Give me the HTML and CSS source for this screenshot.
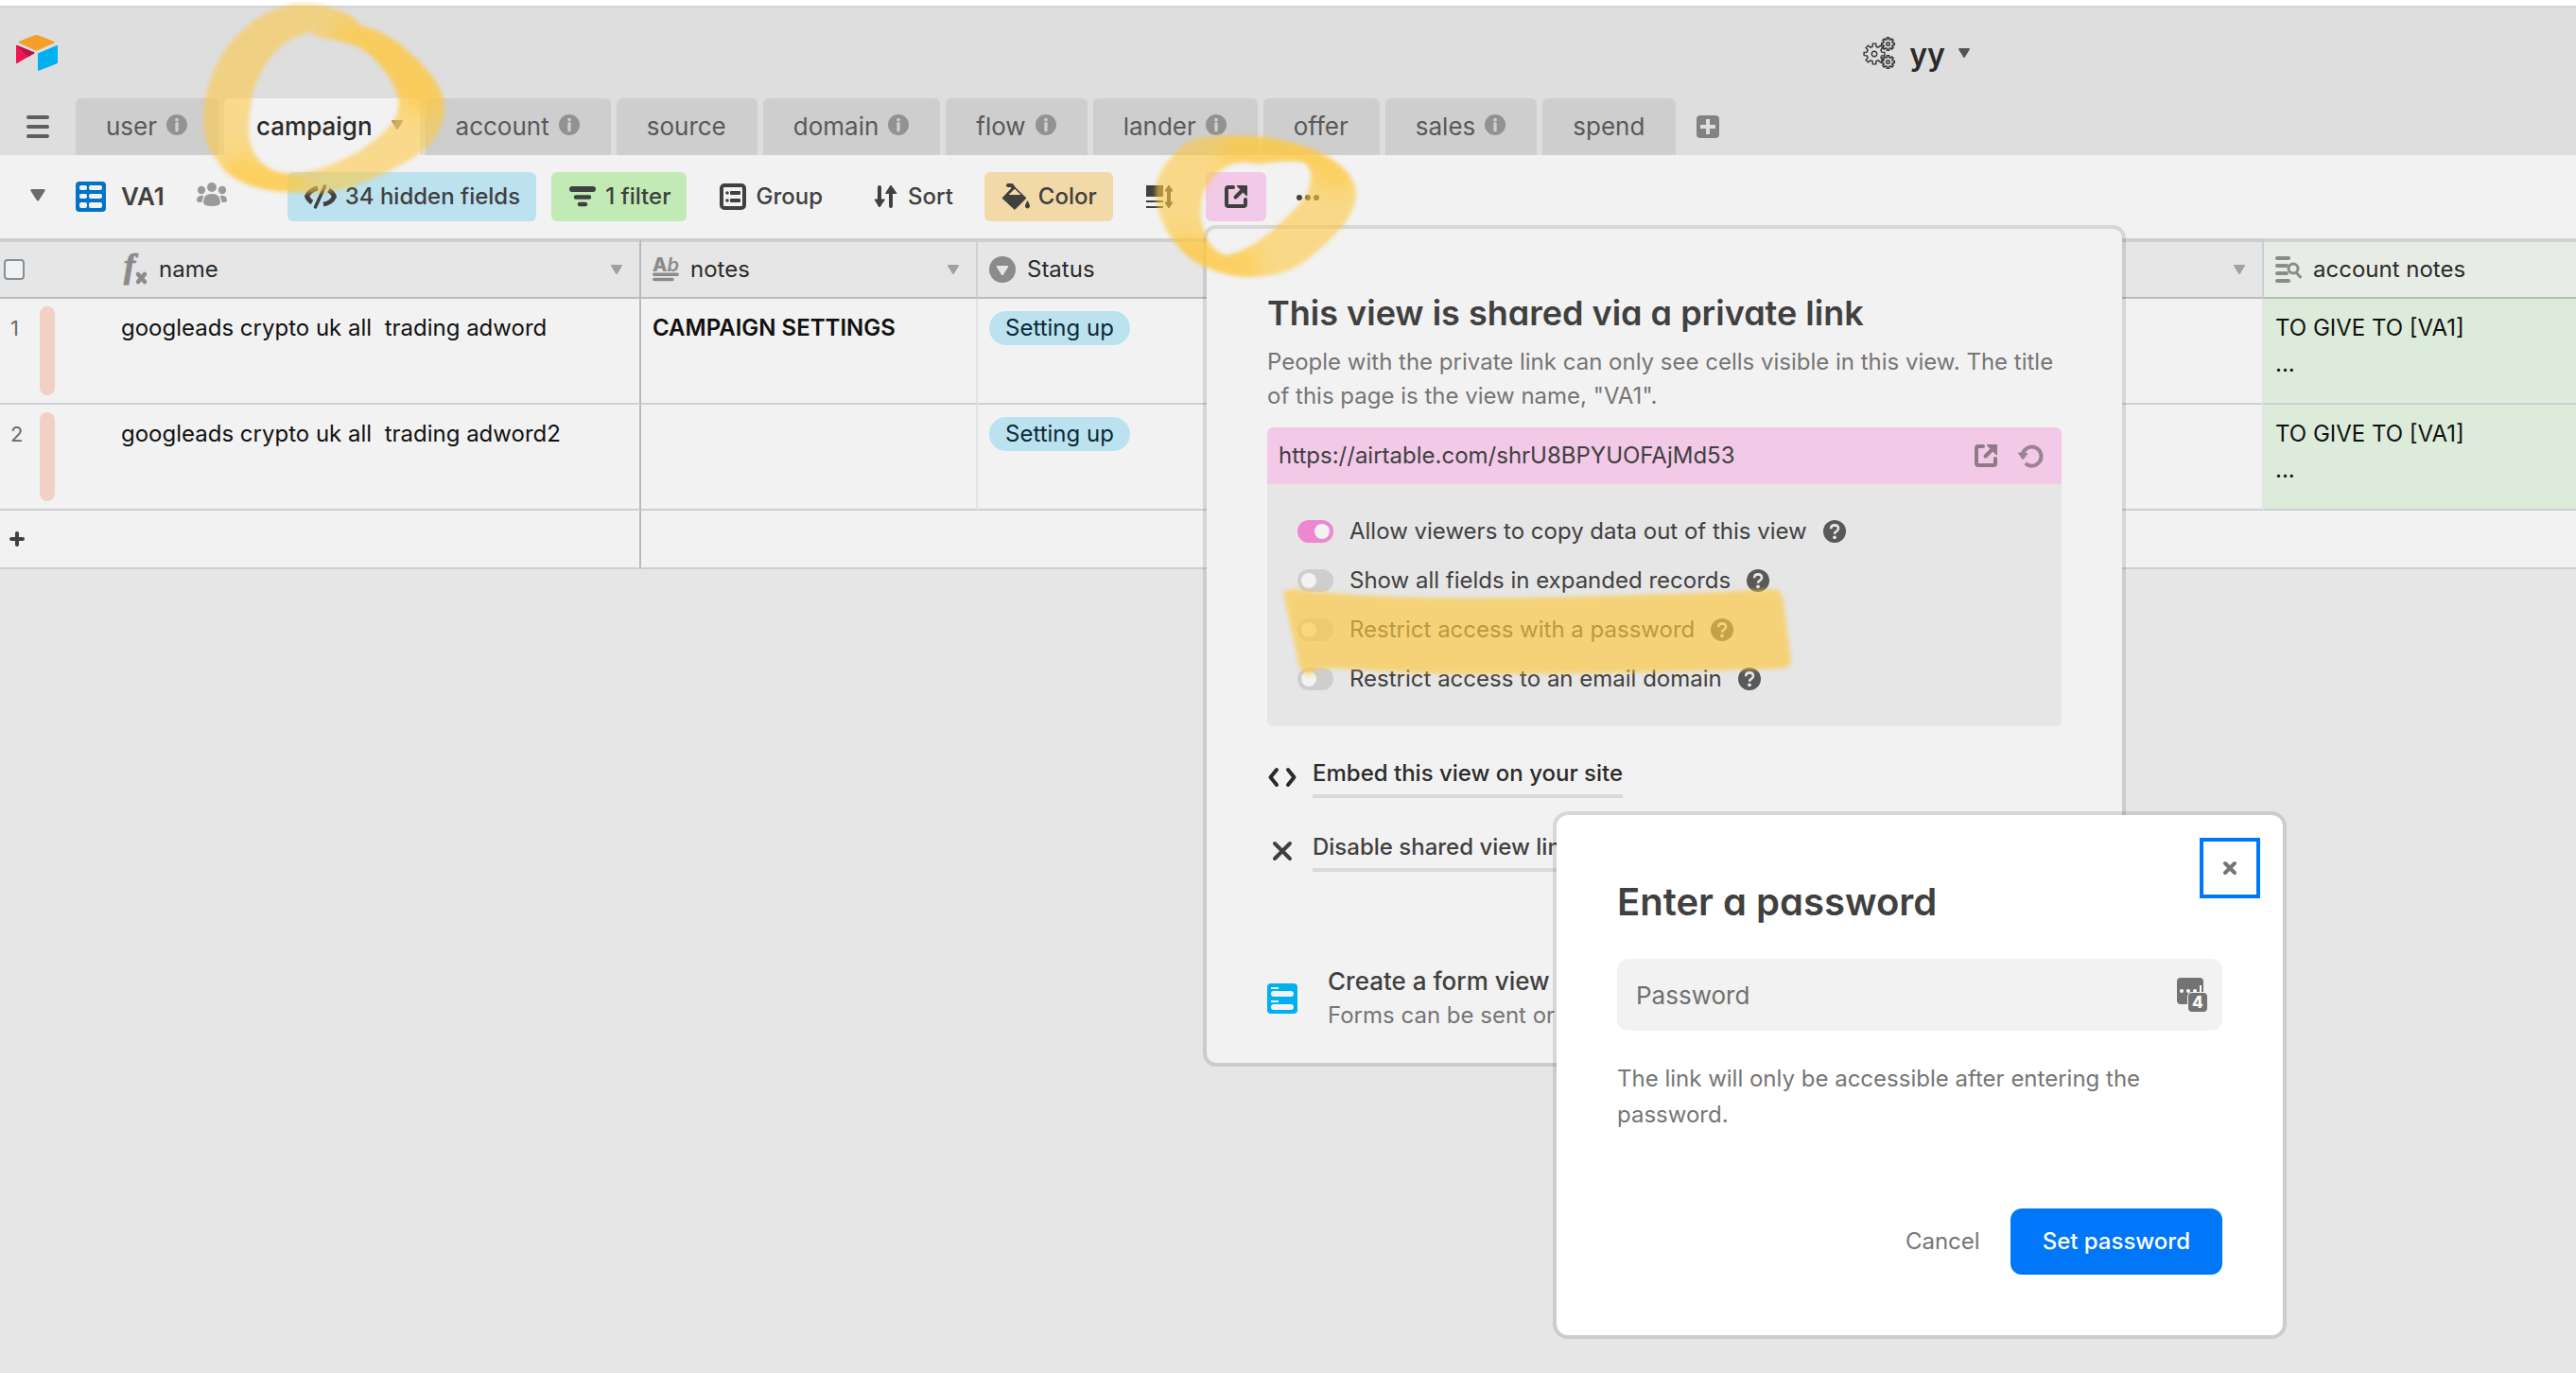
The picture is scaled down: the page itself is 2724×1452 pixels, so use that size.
FILE: index.html
```html
<!DOCTYPE html>
<html lang="en">
<head>
<meta charset="utf-8">
<meta name="viewport" content="width=device-width, initial-scale=1">
<title>yy: campaign - Airtable</title>
<link rel="stylesheet" href="styles.css">
</head>
<body>
<svg class="defs" aria-hidden="true">
  <symbol id="gear" viewBox="-12 -12 24 24"><path d="M7.8-1.9 10.9-1.7V1.7L7.8 1.9 6.9 4.1 8.9 6.5 6.5 8.9 4.1 6.9 1.9 7.8 1.7 10.9H-1.7L-1.9 7.8-4.1 6.9-6.5 8.9-8.9 6.5-6.9 4.1-7.8 1.9-10.9 1.7V-1.7L-7.8-1.9-6.9-4.1-8.9-6.5-6.5-8.9-4.1-6.9-1.9-7.8-1.7-10.9H1.7L1.9-7.8 4.1-6.9 6.5-8.9 8.9-6.5 6.9-4.1Z"/><circle r="2.8"/></symbol>
  <symbol id="info" viewBox="0 0 22 22"><circle cx="11" cy="11" r="11" fill="#929292"/><circle cx="11" cy="5.6" r="1.9" fill="#cecece"/><path d="M11 9.6v7.2" stroke="#cecece" stroke-width="3.4" stroke-linecap="round"/></symbol>
  <symbol id="caret" viewBox="0 0 12 10"><path d="M1 0h10q1.4.3.7 1.6L6.8 9.4q-.8 1-1.6 0L.3 1.6Q-.4.3 1 0Z" fill="currentColor"/></symbol>
  <symbol id="help" viewBox="0 0 24 24"><circle cx="12" cy="12" r="12" fill="#595959"/><path d="M8 9.3Q8.200 5.500 12 5.400 16 5.500 16 9q0 1.800-2.300 3.200-1.700 1-1.700 2.600" fill="none" stroke="#e6e6e6" stroke-width="2.600"/><circle cx="12" cy="18.300" r="1.900" fill="#e6e6e6"/></symbol>
  <symbol id="open" viewBox="0 0 24 24"><path d="M9 2H4Q2 2 2 4v16q0 2 2 2h16q2 0 2-2v-5" fill="none" stroke="currentColor" stroke-width="4" stroke-linecap="round" stroke-linejoin="round"/><path d="M11.500 12.500 18 6" stroke="currentColor" stroke-width="4" stroke-linecap="round"/><path d="M13.500 0H23q1 0 1 1v9.500q-.4 1-1.300.4L13.200 1.300q-.5-1 .3-1.300Z" fill="currentColor"/></symbol>
</svg>

<div class="app">
  <header class="topbar">
    <a class="home" href="#" aria-label="Home">
      <svg width="46" height="40" viewBox="0 0 46 40"><path d="M4.400 7.800 20.500 1.300q1.900-.7 3.800 0L41 7.800q1.800.9 0 1.800L24.300 17q-1.900.8-3.800 0L4.400 9.600q-1.800-.9 0-1.800Z" fill="#f49f27"/><path d="M24 20.600 44 12q1-.3 1 .8v17.300q0 .8-.8 1.200L25 38.800q-1 .4-1-.7Z" fill="#00b0f0"/><path d="M1 12q.3-.4 1.200 0L20 19.200q1 .7 0 1.300L2 31q-1 .4-1-.8Z" fill="#f11651"/><path d="M1.500 11.800 20 19.200q1 .7 0 1.300l-6.200 3.700Z" fill="#b8124a"/></svg>
    </a>
    <button class="base-name" type="button">
      <svg class="gears" width="32" height="32" viewBox="0 0 32 32"><use href="#gear" x="-1" y="5" width="24" height="24"/><g stroke-width="2.400"><use href="#gear" x="18" y="-1" width="15" height="15"/><use href="#gear" x="18" y="18" width="15" height="15"/></g></svg>
      <span>yy</span>
      <svg width="12" height="10"><use href="#caret"/></svg>
    </button>
  </header>

  <nav class="tabs" aria-label="Tables">
    <button class="menu" type="button" aria-label="All tables"><span></span><span></span><span></span></button>
    <a class="tab" href="#">user <svg width="22" height="22"><use href="#info"/></svg></a>
    <a class="tab current" href="#" aria-current="page">campaign <svg width="12" height="10"><use href="#caret"/></svg></a>
    <a class="tab" href="#">account <svg width="22" height="22"><use href="#info"/></svg></a>
    <a class="tab" href="#">source</a>
    <a class="tab" href="#">domain <svg width="22" height="22"><use href="#info"/></svg></a>
    <a class="tab" href="#">flow <svg width="22" height="22"><use href="#info"/></svg></a>
    <a class="tab" href="#">lander <svg width="22" height="22"><use href="#info"/></svg></a>
    <a class="tab" href="#">offer</a>
    <a class="tab" href="#">sales <svg width="22" height="22"><use href="#info"/></svg></a>
    <a class="tab" href="#">spend</a>
    <button class="add-table" type="button" aria-label="Add table"><svg width="24" height="24"><rect width="24" height="24" rx="4" fill="#828282"/><path d="M12 4v16M4 12h16" stroke="#dedede" stroke-width="4"/></svg></button>
  </nav>

  <div class="toolbar">
    <button class="view" type="button">
      <svg class="view-caret" width="16" height="13" viewBox="0 0 16 13"><path d="M1.500 0h13q2 .3 1 2L9 12q-1 1.200-2 0L.5 2q-1-1.700 1-2Z" fill="#6b6b6b"/></svg>
      <svg width="32" height="32"><rect width="32" height="32" rx="4" fill="#0273c5"/><g fill="#f2f2f2"><rect x="4" y="4" width="8" height="5" rx="2"/><rect x="14" y="4" width="14" height="5" rx="2"/><rect x="4" y="13" width="8" height="5" rx="2"/><rect x="14" y="13" width="14" height="5" rx="2"/><rect x="4" y="22" width="8" height="6" rx="2"/><rect x="14" y="22" width="14" height="6" rx="2"/></g></svg>
      <span>VA1</span>
    </button>
    <svg class="people" width="32" height="26" viewBox="0 0 32 26"><g fill="#9a9a9a"><circle cx="16" cy="5" r="5"/><circle cx="5" cy="8" r="4.200"/><circle cx="27" cy="8" r="4.200"/><path d="M7 21q0-9 9-9t9 9q0 4-9 4t-9-4Z"/><path d="M0 19q0-5 5-5.200 1.500 0 2.500.6Q5.500 17 5.500 21 0 21.200 0 19ZM32 19q0-5-5-5.200-1.500 0-2.500.6 2 2.600 2 6.600 5.500.2 5.500-2Z"/></g></svg>
    <div class="tools">
      <button class="tool blue" type="button"><svg width="36" height="28" viewBox="0 0 36 28"><g fill="none" stroke="#404040" stroke-width="5" stroke-linejoin="round"><path d="M15 5Q7 6.500 3.500 13.500q2 4.500 5.500 6.500M21 22q8-1 11.500-8-2-4.800-6-7"/></g><path d="M22.500 3 12.500 25" stroke="#404040" stroke-width="3.500" stroke-linecap="round"/></svg>34 hidden fields</button>
      <button class="tool green" type="button"><svg width="32" height="28"><g stroke="#404040" stroke-width="6" stroke-linecap="round"><path d="M5 6h22"/><path d="M9 14.500h14M13 22h6" stroke-width="4.500"/></g></svg>1 filter</button>
      <button class="tool" type="button"><svg width="32" height="28"><rect x="4" y="2" width="24" height="24" rx="3" fill="none" stroke="#404040" stroke-width="4"/><g fill="#404040"><circle cx="10" cy="10" r="1.800"/><circle cx="10" cy="18" r="1.800"/><rect x="13" y="8" width="11" height="4" rx="1"/><rect x="13" y="16" width="11" height="4" rx="1"/></g></svg>Group</button>
      <button class="tool" type="button"><svg width="32" height="28"><path d="M10 4v18M22 24V8" stroke="#404040" stroke-width="4" stroke-linecap="round"/><path d="M5 17h10.500l-5.500 8zM16.500 10.500 22 2l6 8.500z" fill="#404040" stroke="#404040" stroke-linejoin="round"/></svg>Sort</button>
      <button class="tool orange" type="button"><svg width="32" height="28"><path d="M8 2h4l3 4.500" fill="none" stroke="#404040" stroke-width="4" stroke-linecap="round" stroke-linejoin="round"/><path d="M14 3 27 15.500 15 27.500 2 15.500Z" fill="#404040" stroke="#404040" stroke-linejoin="round"/><path d="M8.500 12h13L15 5.800Z" fill="#f2d9a8"/><path d="M28.500 18q3 5 2.500 6.500-1 2-2.500 2T26 24.500q-.5-1.500 2.500-6.500Z" fill="#404040"/></svg>Color</button>
      <button class="tool" type="button" aria-label="Row height"><svg width="32" height="28"><path d="M2 2h18v12H2zM2 18h18v2H2zM2 24h18v2H2z" fill="#404040"/><path d="M26 6v16" stroke="#404040" stroke-width="4"/><path d="M22 8l4-6 4 6zM22 20l4 6 4-6z" fill="#404040" stroke="#404040" stroke-linejoin="round"/></svg></button>
      <button class="tool pink" type="button" aria-label="Share view"><svg width="32" height="24"><use href="#open" x="4" width="24" height="24"/></svg></button>
      <button class="tool" type="button" aria-label="More options"><svg width="32" height="28"><g fill="#404040"><circle cx="7" cy="15" r="3"/><circle cx="16" cy="15" r="3"/><circle cx="25" cy="15" r="3"/></g></svg></button>
    </div>
  </div>

  <table class="grid">
    <colgroup><col class="c-num"><col class="c-name"><col class="c-notes"><col class="c-status"><col><col class="c-account"></colgroup>
    <thead>
      <tr>
        <th class="num"><input class="check" type="checkbox" aria-label="Select all records"></th>
        <th class="pinned"><div class="field"><svg width="28" height="34"><text x="3" y="25" class="fx-letter">f</text><path d="m18 22 7 8M25 22l-7 8" stroke="#8b8b8b" stroke-width="4.500" stroke-linecap="round"/></svg><span>name</span><svg class="drop" width="12" height="10"><use href="#caret"/></svg></div></th>
        <th><div class="field"><svg class="wide" width="32" height="30" viewBox="0 0 32 30"><text x="0" y="17" class="ab-letter">A<tspan class="ab-italic">b</tspan></text><path d="M2 21h28M2 27h22" stroke="#8b8b8b" stroke-width="4" stroke-linecap="round"/></svg><span>notes</span><svg class="drop" width="12" height="10"><use href="#caret"/></svg></div></th>
        <th><div class="field"><svg width="28" height="28"><circle cx="14" cy="14" r="14" fill="#8b8b8b"/><path d="M8.500 10h11q1.200.3.500 1.600L15 19.500q-1 1-2 0L8 11.600Q7.300 10.300 8.500 10Z" fill="#e6e6e6"/></svg><span>Status</span></div></th>
        <th><div class="field"><svg class="drop" width="12" height="10"><use href="#caret"/></svg></div></th>
        <th class="tinted"><div class="field"><svg width="28" height="28"><path d="M2 2h12M2 10h10M2 18h10M2 26h12" stroke="#8b8b8b" stroke-width="4" stroke-linecap="round"/><circle cx="19" cy="13" r="5" fill="none" stroke="#8b8b8b" stroke-width="3"/><path d="m22 17 4.500 5" stroke="#8b8b8b" stroke-width="3" stroke-linecap="round"/></svg><span>account notes</span></div></th>
      </tr>
    </thead>
    <tbody>
      <tr>
        <td class="num"><div class="row-num">1<i class="bar"></i></div></td>
        <td class="pinned"><div class="cell">googleads crypto uk all&nbsp; trading adword</div></td>
        <td><div class="cell strong">CAMPAIGN SETTINGS</div></td>
        <td><div class="cell"><span class="pill">Setting up</span></div></td>
        <td></td>
        <td class="tinted"><div class="cell">TO GIVE TO [VA1]<br>...</div></td>
      </tr>
      <tr>
        <td class="num"><div class="row-num">2<i class="bar"></i></div></td>
        <td class="pinned"><div class="cell">googleads crypto uk all&nbsp; trading adword2</div></td>
        <td></td>
        <td><div class="cell"><span class="pill">Setting up</span></div></td>
        <td></td>
        <td class="tinted"><div class="cell">TO GIVE TO [VA1]<br>...</div></td>
      </tr>
    </tbody>
    <tfoot>
      <tr>
        <td class="num"><button class="add-row" type="button" aria-label="Add record"><svg width="16" height="16"><path d="M8 2v12M2 8h12" stroke="#404040" stroke-width="4" stroke-linecap="round"/></svg></button></td>
        <td class="pinned"></td>
        <td colspan="4"></td>
      </tr>
    </tfoot>
  </table>
  <div class="below"><div class="below-pinned"></div></div>
</div>

<section class="popover" aria-labelledby="share-title">
  <h2 id="share-title">This view is shared via a private link</h2>
  <p class="lead">People with the private link can only see cells visible in this view. The title of this page is the view name, "VA1".</p>
  <div class="link-bar">
    <span>https://airtable.com/shrU8BPYUOFAjMd53</span>
    <button type="button" aria-label="Open link"><svg width="24" height="24"><use href="#open"/></svg></button>
    <button type="button" aria-label="Generate new link"><svg width="26" height="24" viewBox="0 0 26 24"><path d="M5 9.500A10 10 0 1 1 9 21" fill="none" stroke="#9b8492" stroke-width="4" stroke-linecap="round"/><path d="M0 9.500Q.2 8.700 1.500 8.500l8 .3q1 .4.400 1.400L6 15.500q-.8.8-1.600 0Z" fill="#9b8492"/></svg></button>
  </div>
  <div class="settings">
    <div class="setting"><label><input class="toggle" type="checkbox" checked>Allow viewers to copy data out of this view</label><svg width="24" height="24"><use href="#help"/></svg></div>
    <div class="setting"><label><input class="toggle" type="checkbox">Show all fields in expanded records</label><svg width="24" height="24"><use href="#help"/></svg></div>
    <div class="setting"><label><input class="toggle" type="checkbox">Restrict access with a password</label><svg width="24" height="24"><use href="#help"/></svg></div>
    <div class="setting"><label><input class="toggle" type="checkbox">Restrict access to an email domain</label><svg width="24" height="24"><use href="#help"/></svg></div>
  </div>
  <div class="actions">
    <div class="action"><svg width="32" height="24"><path d="M10 4 3.500 12l6.500 8M22 4l6.500 8L22 20" fill="none" stroke="#2b2b2b" stroke-width="4" stroke-linecap="round" stroke-linejoin="round"/></svg><a class="embed" href="#">Embed this view on your site</a></div>
    <div class="action"><svg width="32" height="24"><path d="m8 4 16 16M24 4 8 20" stroke="#404040" stroke-width="4" stroke-linecap="round"/></svg><a href="#">Disable shared view link</a></div>
  </div>
  <div class="form-view">
    <svg width="32" height="32"><rect width="32" height="32" rx="4" fill="#00b0f0"/><g fill="#f2f2f2"><rect x="4" y="4" width="8" height="2"/><rect x="4" y="8" width="24" height="6" rx="3"/><rect x="4" y="18" width="8" height="2"/><rect x="4" y="22" width="24" height="6" rx="3"/></g></svg>
    <div><h3>Create a form view</h3><p>Forms can be sent or</p></div>
  </div>
</section>

<svg class="marker" aria-hidden="true">
  <defs>
    <filter id="soft" x="-10%" y="-10%" width="120%" height="120%"><feGaussianBlur stdDeviation="2"/></filter>
    <filter id="wash" x="-30%" y="-30%" width="160%" height="160%"><feGaussianBlur stdDeviation="10"/></filter>
    <clipPath id="ring1"><path clip-rule="evenodd" d="M323 4C345 5 372 12 381 27C400 31 414 39 427 50C450 70 472 92 470 118C468 146 446 164 413 180C390 193 362 203 333 204C308 204 285 202 267 197C248 190 236 182 230 170C220 157 215 145 215 127C215 108 219 90 227 73C236 52 250 36 267 23C284 10 303 4 323 4ZM332 33L330 37C348 43 364 42 380 50C400 62 420 88 422 110C421 130 400 146 380 160C365 168 348 176 333 180C320 183 310 184 300 183C287 181 278 175 272 167C265 157 262 147 263 133C264 115 266 98 273 83C279 68 289 56 300 47C310 39 321 36 332 33Z"/></clipPath>
    <clipPath id="ring2"><path clip-rule="evenodd" d="M1275 145C1300 143 1335 143 1350 147C1385 153 1430 172 1434 202C1436 226 1412 252 1379 277C1360 290 1340 293 1318 293C1295 292 1275 284 1260 274C1240 258 1224 235 1222 203C1222 188 1230 175 1240 165C1250 152 1262 146 1275 145ZM1312 172C1320 171 1326 174 1336 173C1350 171 1370 169 1379 172C1386 177 1388 185 1385 195C1382 210 1375 215 1365 225C1345 246 1320 266 1296 270C1284 267 1276 254 1273 243C1268 228 1268 210 1276 197C1284 184 1296 173 1312 172Z"/></clipPath>
  </defs>
  <g filter="url(#soft)" fill="#fec83f">
    <g clip-path="url(#ring1)"><path fill-opacity=".58" d="M200 0h290v220H200z"/><path d="M355 38C410 45 450 90 452 120M240 175Q270 200 320 196" fill="none" stroke="#fec83f" stroke-opacity=".6" stroke-width="44" filter="url(#wash)"/></g>
    <g clip-path="url(#ring2)"><path fill-opacity=".6" d="M1200 130h250v180h-250z"/><path d="M1290 155C1340 155 1400 160 1425 195M1240 255Q1280 290 1330 280" fill="none" stroke="#fec83f" stroke-opacity=".6" stroke-width="36" filter="url(#wash)"/></g>
    <path fill-opacity=".65" d="M1357 628Q1360 623 1368 623C1440 632 1520 633 1600 632S1780 628 1878 623Q1884 625 1886 636L1894 698Q1894 706 1884 707C1780 711 1640 713 1560 713S1440 706 1392 707L1386 714Q1378 714 1374 704Z"/>
  </g>
</svg>

<form class="modal" role="dialog" aria-labelledby="pw-title">
  <button class="close" type="button" aria-label="Close"><svg width="16" height="16"><path d="m3 3 10 10M13 3 3 13" stroke="#757575" stroke-width="4" stroke-linecap="round"/></svg></button>
  <h2 id="pw-title">Enter a password</h2>
  <div class="password">
    <input type="password" placeholder="Password" aria-label="Password">
    <svg width="32" height="36"><rect width="28" height="28" rx="4" fill="#737373"/><g fill="#fff"><circle cx="5" cy="14" r="2"/><circle cx="12" cy="14" r="2"/><circle cx="19" cy="14" r="2"/><rect x="24" y="8" width="2" height="9"/></g><rect x="11" y="15" width="22" height="22" rx="5" fill="#f2f2f2"/><rect x="12" y="16" width="20" height="20" rx="4" fill="#737373"/><text x="16" y="32" class="badge-digit">4</text></svg>
  </div>
  <p>The link will only be accessible after entering the password.</p>
  <div class="buttons"><button class="cancel" type="button">Cancel</button><button class="submit" type="submit">Set password</button></div>
</form>
</body>
</html>
```
FILE: styles.css
```css
* { box-sizing: border-box; margin: 0; }

body {
  position: relative;
  background: #e6e6e6;
  color: #404040;
  font: 24px/36px Inter, "Liberation Sans", sans-serif;
}

svg { display: block; flex: none; overflow: visible; }
.defs { position: absolute; width: 0; height: 0; }
button { padding: 0; border: 0; background: none; color: inherit; font: inherit; }
a { color: inherit; text-decoration: none; }

.app { display: flex; flex-direction: column; min-height: 100vh; border-top: 6px solid #fff; }

/* Base header */
.topbar {
  display: flex;
  height: 98px;
  border-top: 2px solid #d0d4d9;
  background: #dedede;
}
.home { flex: 0 0 72%; padding: 28px 16px; }
.base-name { display: flex; align-items: center; height: 96px; padding-left: 10px; color: #2b2b2b; font-size: 32px; font-weight: 600; }
.base-name span { padding: 4px 14px 0 16px; }
.gears { fill: none; stroke: #333; stroke-width: 1.400; }
.base-name svg:last-child { color: #555; }

/* Table tabs */
.tabs { display: flex; gap: 6px; height: 60px; background: #dedede; }
.menu { display: flex; flex-direction: column; justify-content: center; gap: 6px; width: 74px; padding-left: 28px; }
.menu span { width: 24px; height: 4px; border-radius: 2px; background: #5f5f5f; }
.tab {
  display: flex;
  align-items: center;
  gap: 10px;
  padding: 0 33px 0 32px;
  border-radius: 6px 6px 0 0;
  background: #cecece;
  color: #595959;
  font-size: 26px;
}
.tab svg { margin-bottom: 4px; }
.tab.current { gap: 20px; padding: 0 18px 0 34px; background: #f2f2f2; color: #2b2b2b; font-weight: 500; }
.tab.current svg { color: #8b8b8b; }
.add-table { padding: 0 16px; }

/* View toolbar */
.toolbar { display: flex; align-items: center; height: 88px; padding-left: 32px; background: #f2f2f2; }
.view { display: flex; align-items: center; gap: 16px; font-size: 26px; font-weight: 600; }
.view-caret { margin: 0 16px 4px 0; }
.people { margin: 0 64px 4px 34px; }
.tools { display: flex; gap: 16px; }
.tool { display: flex; align-items: center; gap: 8px; height: 52px; padding: 0 17px; border-radius: 6px; font-weight: 500; white-space: nowrap; }
.tool.blue { background: #bce2f0; }
.tool.green { background: #c2eab5; }
.tool.orange { background: #f2d9a8; }
.tool.pink { padding: 0 16px; background: #f2c9e7; }
.tool.pink + .tool { padding: 0 12px; }

/* Record grid */
.grid { width: 100%; table-layout: fixed; border-collapse: separate; border-spacing: 0; color: #111; }
.c-num { width: 116px; }
.c-name { width: 562px; }
.c-notes { width: 356px; }
.c-status { width: 300px; }
.c-account { width: 330px; }
th { height: 64px; padding: 0; border-top: 4px solid #cecece; border-bottom: 2px solid #bbb; border-right: 2px solid #ccd0d3; background: #e6e6e6; color: #2b2b2b; font-weight: 400; text-align: left; }
td { height: 112px; padding: 0; border-bottom: 2px solid #cbd0d3; border-right: 2px solid #e2e4e5; background: #f2f2f2; vertical-align: top; }
th.tinted { border-top-color: #cfd4ce; border-right: 0; background: #e8ece6; }
td.tinted { border-right: 0; background: #ddebda; }
tfoot td { height: 62px; border-right: 0; }
th.num, td.num { border-right: 0; }
th.pinned, td.pinned { border-right: 2px solid #b8b9b9; }
.check { display: block; width: 22px; height: 22px; margin: 0 0 0 4px; appearance: none; border: 2px solid #84909b; border-radius: 4px; background: #f2f2f2; }
.field { display: flex; align-items: center; gap: 12px; height: 58px; padding: 0 18px 0 12px; }
.field .wide { width: 28px; }
.drop { margin-left: auto; color: #a0a0a0; }
.fx-letter { fill: #8b8b8b; stroke: #8b8b8b; stroke-width: 1; font: italic bold 36px "Liberation Serif", serif; }
.ab-letter { fill: #8b8b8b; font: 800 23px Inter, sans-serif; }
.ab-italic { font-style: italic; font-weight: 600; }
.cell { padding: 12px 12px 0; line-height: 38px; white-space: nowrap; }
.cell.strong { font-weight: 600; }
.pill { display: inline-block; padding: 0 17px; border-radius: 18px; background: #bce2f0; color: #0b2a35; line-height: 36px; }
.row-num { display: flex; justify-content: space-between; height: 110px; padding: 12px 58px 0 11px; color: #6b6b6b; font-size: 22px; line-height: 38px; }
.bar { width: 16px; height: 94px; margin-top: -4px; border-radius: 8px; background: #f2d1c4; }
.add-row { display: block; padding: 22px 10px; }
.below { flex: 1; background: #e6e6e6; }
.below-pinned { width: 678px; height: 100%; border-right: 2px solid #b8b9b9; background: #eaeaea; }

/* Share popover */
.popover {
  position: absolute;
  top: 242px;
  left: 1276px;
  width: 968px;
  padding: 68px 64px 32px;
  border-radius: 10px;
  background: #f2f2f2;
  box-shadow: 0 0 0 4px rgba(0, 0, 0, .11);
}
h2 { font-weight: 600; font-feature-settings: "cv11"; }
.popover h2 { font-size: 36px; line-height: 42px; white-space: nowrap; }
.lead { margin: 13px 0 15px; color: #757575; }
.link-bar { display: flex; align-items: center; gap: 22px; height: 60px; padding: 0 20px 0 12px; border-radius: 6px 6px 0 0; background: #f2c9e7; }
.link-bar span { flex: 1; }
.link-bar button { color: #8f7a88; }
.settings { padding: 24px 32px; border-radius: 0 0 6px 6px; background: #e6e6e6; }
.setting, .setting label { display: flex; align-items: center; gap: 17px; height: 52px; }
.toggle { width: 38px; height: 24px; margin: 0; padding: 4px; appearance: none; border-radius: 12px; background: #cecece; }
.toggle::before { content: ""; display: block; width: 16px; height: 16px; border-radius: 8px; background: #f2f2f2; }
.toggle:checked { background: #ec87d0; }
.toggle:checked::before { margin-left: auto; }
.actions { display: grid; gap: 34px; margin-top: 32px; }
.action { display: flex; align-items: center; gap: 16px; font-weight: 500; }
.action a { padding-bottom: 4px; border-bottom: 4px solid #d9d9d9; white-space: nowrap; }
.embed { color: #2b2b2b; }
.form-view { display: flex; align-items: center; gap: 32px; margin-top: 98px; }
.form-view h3 { font-size: 26px; font-weight: 500; line-height: 36px; }
.form-view p { color: #757575; }

/* Highlighter strokes drawn over the page */
.marker { position: absolute; top: 0; left: 0; width: 100%; height: 100%; overflow: hidden; pointer-events: none; }

/* Password dialog */
.modal {
  position: absolute;
  top: 862px;
  left: 1646px;
  width: 768px;
  padding: 68px 64px 64px;
  border-radius: 12px;
  background: #fff;
  box-shadow: 0 0 0 4px rgba(0, 0, 0, .11);
}
.close { position: absolute; top: 24px; right: 24px; display: grid; place-items: center; width: 64px; height: 64px; border: 4px solid #0077f8; }
.modal h2 { font-size: 40px; line-height: 48px; }
.password { display: flex; align-items: center; height: 76px; margin: 36px 0 32px; padding: 0 16px 0 20px; border-radius: 12px; background: #f2f2f2; }
.password input { flex: 1; min-width: 0; height: 76px; padding: 0; border: 0; outline: 0; background: none; color: #404040; font: inherit; font-size: 26px; }
.password input::placeholder { color: #707070; opacity: 1; }
.badge-digit { fill: #fff; font: 800 17px Inter, sans-serif; }
.modal p { color: #757575; line-height: 38px; }
.buttons { display: flex; justify-content: flex-end; gap: 32px; margin-top: 80px; }
.cancel { color: #757575; }
.submit { height: 70px; padding: 0 34px; border-radius: 12px; background: #0077f8; color: #fff; font-weight: 500; }
```
